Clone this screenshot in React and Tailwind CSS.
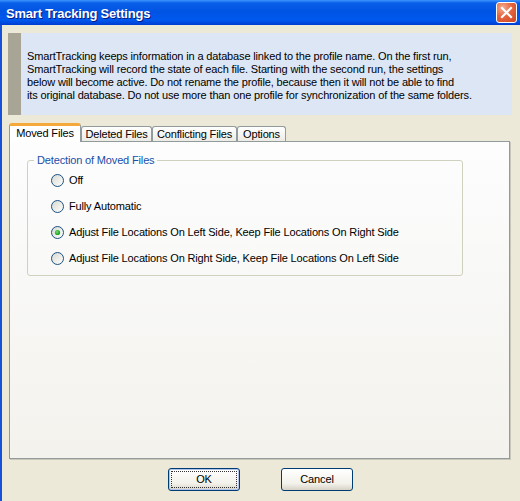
import React, { useState } from 'react';

const infoLines = [
  'SmartTracking keeps information in a database linked to the profile name. On the first run,',
  'SmartTracking will record the state of each file. Starting with the second run, the settings',
  'below will become active. Do not rename the profile, because then it will not be able to find',
  'its original database. Do not use more than one profile for synchronization of the same folders.',
];

const tabs = [
  { name: 'Moved Files', w: 'w-[72px]' },
  { name: 'Deleted Files', w: 'w-[71px]' },
  { name: 'Conflicting Files', w: 'w-[85px]' },
  { name: 'Options', w: 'w-[49px]' },
];

const options = [
  'Off',
  'Fully Automatic',
  'Adjust File Locations On Left Side, Keep File Locations On Right Side',
  'Adjust File Locations On Right Side, Keep File Locations On Left Side',
];

const Radio = ({ checked }) => (
  <svg width="13" height="13" viewBox="0 0 13 13" className="shrink-0">
    <defs>
      <linearGradient id="radioFill" x1="0" y1="0" x2="1" y2="1">
        <stop offset="0" stopColor="#d8d8d0" />
        <stop offset="1" stopColor="#ffffff" />
      </linearGradient>
      <radialGradient id="radioDot" cx="0.4" cy="0.4" r="0.6">
        <stop offset="0" stopColor="#6ce26a" />
        <stop offset="1" stopColor="#1a9a1a" />
      </radialGradient>
    </defs>
    <circle cx="6.5" cy="6.5" r="6" fill="url(#radioFill)" stroke="#1c5180" strokeWidth="1" />
    {checked && <circle cx="6.5" cy="6.5" r="2.6" fill="url(#radioDot)" />}
  </svg>
);

const CloseButton = () => (
  <div className="w-[21px] h-[21px] rounded-[3px] border border-white flex items-center justify-center bg-[radial-gradient(circle_at_30%_25%,#f3ae92_0%,#e5653f_45%,#cc4520_100%)]">
    <svg width="13" height="13" viewBox="0 0 13 13">
      <path d="M2 2 L11 11 M11 2 L2 11" stroke="#fff" strokeWidth="2.2" strokeLinecap="square" />
    </svg>
  </div>
);

export default function App() {
  const [activeTab, setActiveTab] = useState(0);
  const [selected, setSelected] = useState(2);

  return (
    <div className="w-[520px] h-[501px] flex flex-col overflow-hidden bg-[#ece9d8] text-[11px] leading-[13px] tracking-[-0.15px] text-black font-['Liberation_Sans',Arial,sans-serif]">
      {/* Title bar */}
      <div className="h-[25px] shrink-0 flex items-center justify-between pl-[6px] pr-[3px] bg-[linear-gradient(180deg,#3d95ff_0%,#0a5fe8_12%,#0054e3_45%,#0058ee_80%,#003dd0_100%)]">
        <span className="text-white font-bold text-[13px] tracking-[-0.2px] [text-shadow:1px_1px_#0a1883] pt-[1px]">
          Smart Tracking Settings
        </span>
        <CloseButton />
      </div>

      <div className="flex-1 flex flex-col border-l-2 border-[#1651d9] pl-[6px] pr-[8px] pt-[8px]">
        {/* Info box */}
        <div className="h-[82px] flex bg-[#dce6f5]">
          <div className="w-[13px] bg-[#a8a596]" />
          <div className="pl-[6px] pt-[17px]">
            {infoLines.map((l) => (
              <div key={l} className="whitespace-nowrap">{l}</div>
            ))}
          </div>
        </div>

        {/* Tabs */}
        <div className="mt-[8px] h-[18px] flex items-end ml-[1px]">
          {tabs.map((t, i) =>
            i === activeTab ? (
              <button
                key={t.name}
                onClick={() => setActiveTab(i)}
                className={`${t.w} h-[19px] -mb-[1px] relative z-10 bg-white border border-[#919b9c] border-b-0 border-t-[3px] border-t-[#f5a93a] rounded-t-[3px] flex items-center justify-center pb-[2px]`}
              >
                {t.name}
              </button>
            ) : (
              <button
                key={t.name}
                onClick={() => setActiveTab(i)}
                className={`${t.w} h-[15px] bg-[linear-gradient(180deg,#ffffff,#ecebe5)] border border-[#919b9c] border-b-0 rounded-t-[3px] flex items-center justify-center`}
              >
                {t.name}
              </button>
            )
          )}
        </div>

        {/* Tab panel */}
        <div className="h-[318px] ml-[1px] mr-[2px] border border-[#919b9c] shadow-[1px_1px_0_#c9c7ba] bg-[linear-gradient(180deg,#fdfdfe_0%,#f3f2ed_100%)] pl-[17px] pt-[12px]">
          <fieldset className="w-[436px] border border-[#d0d0bf] rounded-[3px] pb-[4px]">
            <legend className="ml-[6px] px-[3px] text-[#1a4ea8]">Detection of Moved Files</legend>
            {options.map((o, i) => (
              <label
                key={o}
                onClick={() => setSelected(i)}
                className="h-[26px] flex items-center gap-[5px] pl-[23px] cursor-default"
              >
                <Radio checked={selected === i} />
                <span>{o}</span>
              </label>
            ))}
          </fieldset>
        </div>

        {/* Buttons */}
        <div className="mt-[9px] flex justify-center gap-[41px] pl-[1px]">
          <button className="w-[72px] h-[23px] rounded-[3px] border border-[#003c74] p-[2px] bg-[linear-gradient(180deg,#ffffff_0%,#f2f1ea_70%,#d8d2c6_100%)] shadow-[inset_0_0_0_1px_#b2c4ec]">
            <span className="h-full flex items-center justify-center border border-dotted border-[#333]">OK</span>
          </button>
          <button className="w-[72px] h-[23px] rounded-[3px] border border-[#003c74] flex items-center justify-center bg-[linear-gradient(180deg,#ffffff_0%,#f2f1ea_70%,#d8d2c6_100%)]">
            Cancel
          </button>
        </div>
      </div>
    </div>
  );
}
